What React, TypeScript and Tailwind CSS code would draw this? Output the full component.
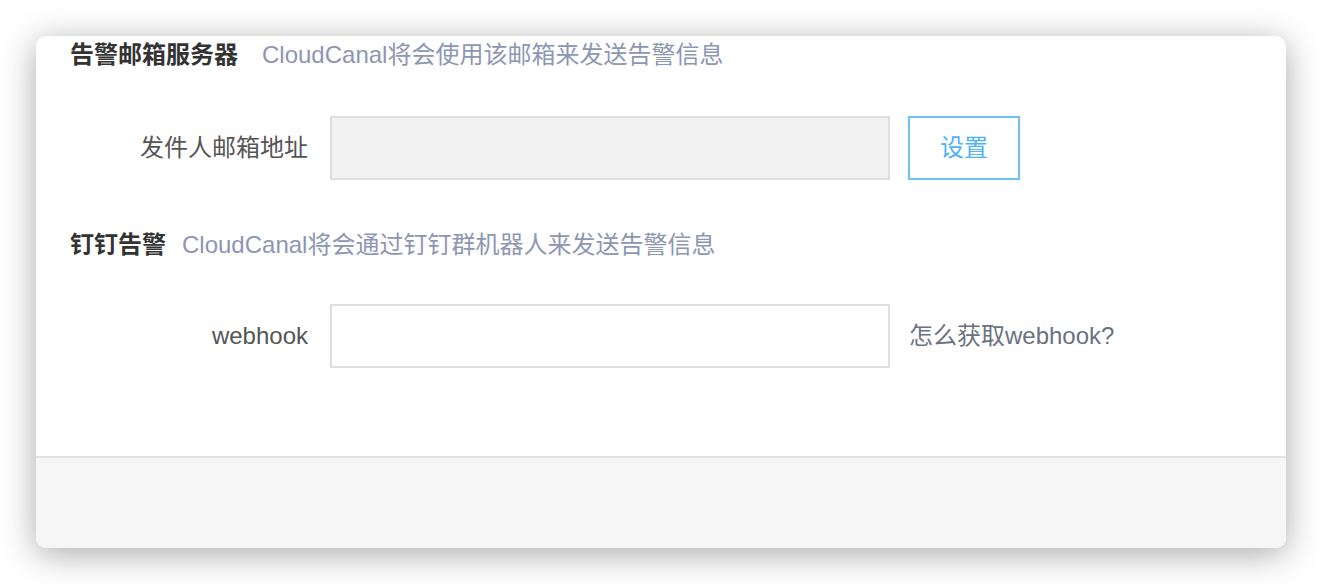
const font = "font-['Liberation_Sans','Noto_Sans_CJK_SC',sans-serif]";

function SectionTitle({ title, desc, gap }: { title: string; desc: string; gap: string }) {
  return (
    <div className={`flex items-center h-[38px] text-[24px] leading-none ${gap}`}>
      <span className="font-bold text-[#333333]">{title}</span>
      <span className="text-[#8d96b2]">{desc}</span>
    </div>
  );
}

export default function App() {
  return (
    <div className={`w-[1322px] h-[584px] bg-white pl-[36px] pt-[36px] ${font}`}>
      <div className="w-[1250px] h-[512px] rounded-[10px] bg-white shadow-[0_6px_34px_rgba(0,0,0,0.34)] flex flex-col overflow-hidden">
        <div className="h-[420px] pl-[34px] flex flex-col">
          <SectionTitle title="告警邮箱服务器" desc="CloudCanal将会使用该邮箱来发送告警信息" gap="gap-[24px]" />

          <div className="mt-[42px] flex items-center h-[64px]">
            <label className="w-[240px] text-right text-[24px] text-[#555555] pr-[2px]">发件人邮箱地址</label>
            <div className="ml-[20px] w-[560px] h-[64px] bg-[#f2f2f2] border-2 border-[#dcdee4]" />
            <button className="ml-[18px] w-[112px] h-[64px] border-2 border-[#6cc2f6] text-[#4db3f3] text-[24px] bg-white">
              设置
            </button>
          </div>

          <div className="mt-[46px]">
            <SectionTitle title="钉钉告警" desc="CloudCanal将会通过钉钉群机器人来发送告警信息" gap="gap-[16px]" />
          </div>

          <div className="mt-[40px] flex items-center h-[64px]">
            <label className="w-[240px] text-right text-[24px] text-[#555555] pr-[2px]">webhook</label>
            <input className="ml-[20px] w-[560px] h-[64px] bg-white border-2 border-[#dcdee4] outline-none" />
            <span className="ml-[19px] text-[24px] text-[#6b7180]">怎么获取webhook?</span>
          </div>
        </div>
        <div className="flex-1 border-t-2 border-[#e3e3e3] bg-[#f6f6f6]" />
      </div>
    </div>
  );
}
